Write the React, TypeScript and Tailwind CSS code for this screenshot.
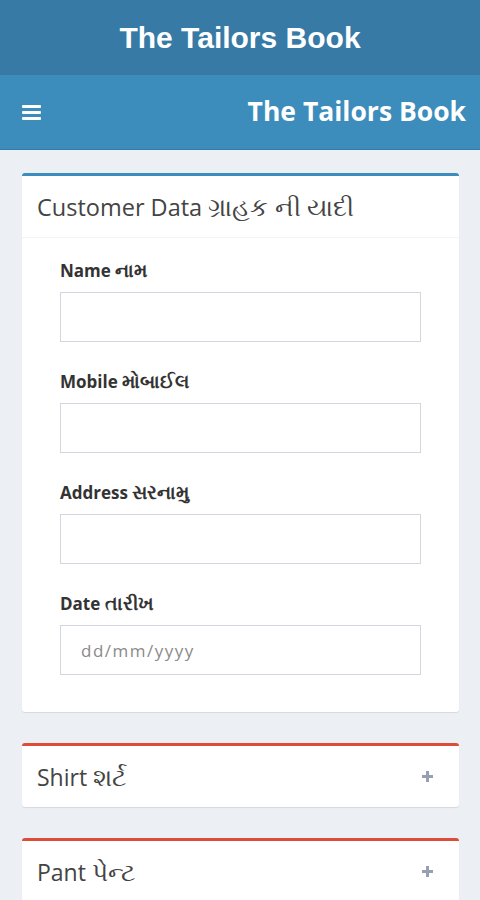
const fields = [
  { label: "Name", gu: "નામ", placeholder: "" },
  { label: "Mobile", gu: "મોબાઈલ", placeholder: "" },
  { label: "Address", gu: "સરનામુ", placeholder: "" },
  { label: "Date", gu: "તારીખ", placeholder: "dd/mm/yyyy" },
]

function CollapsedBox({ title, gu }: { title: string; gu: string }) {
  return (
    <div className="mt-[31px] rounded-[3px] border-t-[3px] border-[#dd4b39] bg-white shadow-[0_1px_1px_rgba(0,0,0,0.1)]">
      <div className="flex h-[61px] items-center justify-between pl-[15px] pr-[25px]">
        <h3 className="text-[23px] leading-[30px] text-[#444]">
          {title} <span className="text-[25px]">{gu}</span>
        </h3>
        <svg width="13" height="13" viewBox="0 0 13 13" className="text-[#97a0b3]">
          <path d="M6.5 1v11M1 6.5h11" stroke="currentColor" strokeWidth="3" />
        </svg>
      </div>
    </div>
  )
}

export default function App() {
  return (
    <div
      className="min-h-[900px] bg-[#ecf0f5]"
      style={{ fontFamily: "'Open Sans', 'Noto Sans', sans-serif" }}
    >
      {/* app bar */}
      <div className="flex h-[75px] items-center justify-center bg-[#367aa5]">
        <h1
          className="text-[30px] font-bold text-white"
          style={{ fontFamily: "'Liberation Sans', Arial, sans-serif" }}
        >
          The Tailors Book
        </h1>
      </div>

      {/* admin header */}
      <div className="flex h-[75px] items-center justify-between border-b border-[#2f7bab] bg-[#3c8dbc] pl-[22px] pr-[14px]">
        <svg width="19" height="15" viewBox="0 0 19 15" className="text-white">
          <rect x="0" y="0" width="19" height="3" rx="1" fill="currentColor" />
          <rect x="0" y="6" width="19" height="3" rx="1" fill="currentColor" />
          <rect x="0" y="12" width="19" height="3" rx="1" fill="currentColor" />
        </svg>
        <span className="text-[26.5px] font-bold text-white">The Tailors Book</span>
      </div>

      <div className="px-[22px] pt-[23px] pr-[21px]">
        {/* customer card */}
        <div className="rounded-[3px] border-t-[3px] border-[#3c8dbc] bg-white shadow-[0_1px_1px_rgba(0,0,0,0.1)]">
          <div className="flex h-[62px] items-center border-b border-[#f4f4f4] px-[15px]">
            <h3 className="text-[23.5px] leading-[30px] text-[#444]">
              Customer Data <span className="text-[25px]">ગ્રાહક ની યાદી</span>
            </h3>
          </div>
          <div className="flex flex-col gap-[29px] px-[38px] pt-[22px] pb-[37px]">
            {fields.map((f) => (
              <div key={f.label}>
                <label className="mb-[12px] block h-[20px] text-[17px] leading-[20px] font-bold text-[#333]">
                  {f.label} <span className="text-[19px]">{f.gu}</span>
                </label>
                <input
                  type="text"
                  placeholder={f.placeholder}
                  className="block h-[50px] w-full border border-[#d2d6de] px-[20px] text-[17px] tracking-[1.5px] text-[#555] outline-none placeholder:text-[#8a8a8a]"
                />
              </div>
            ))}
          </div>
        </div>

        <CollapsedBox title="Shirt" gu="શર્ટ" />
        <CollapsedBox title="Pant" gu="પેન્ટ" />
      </div>
    </div>
  )
}
